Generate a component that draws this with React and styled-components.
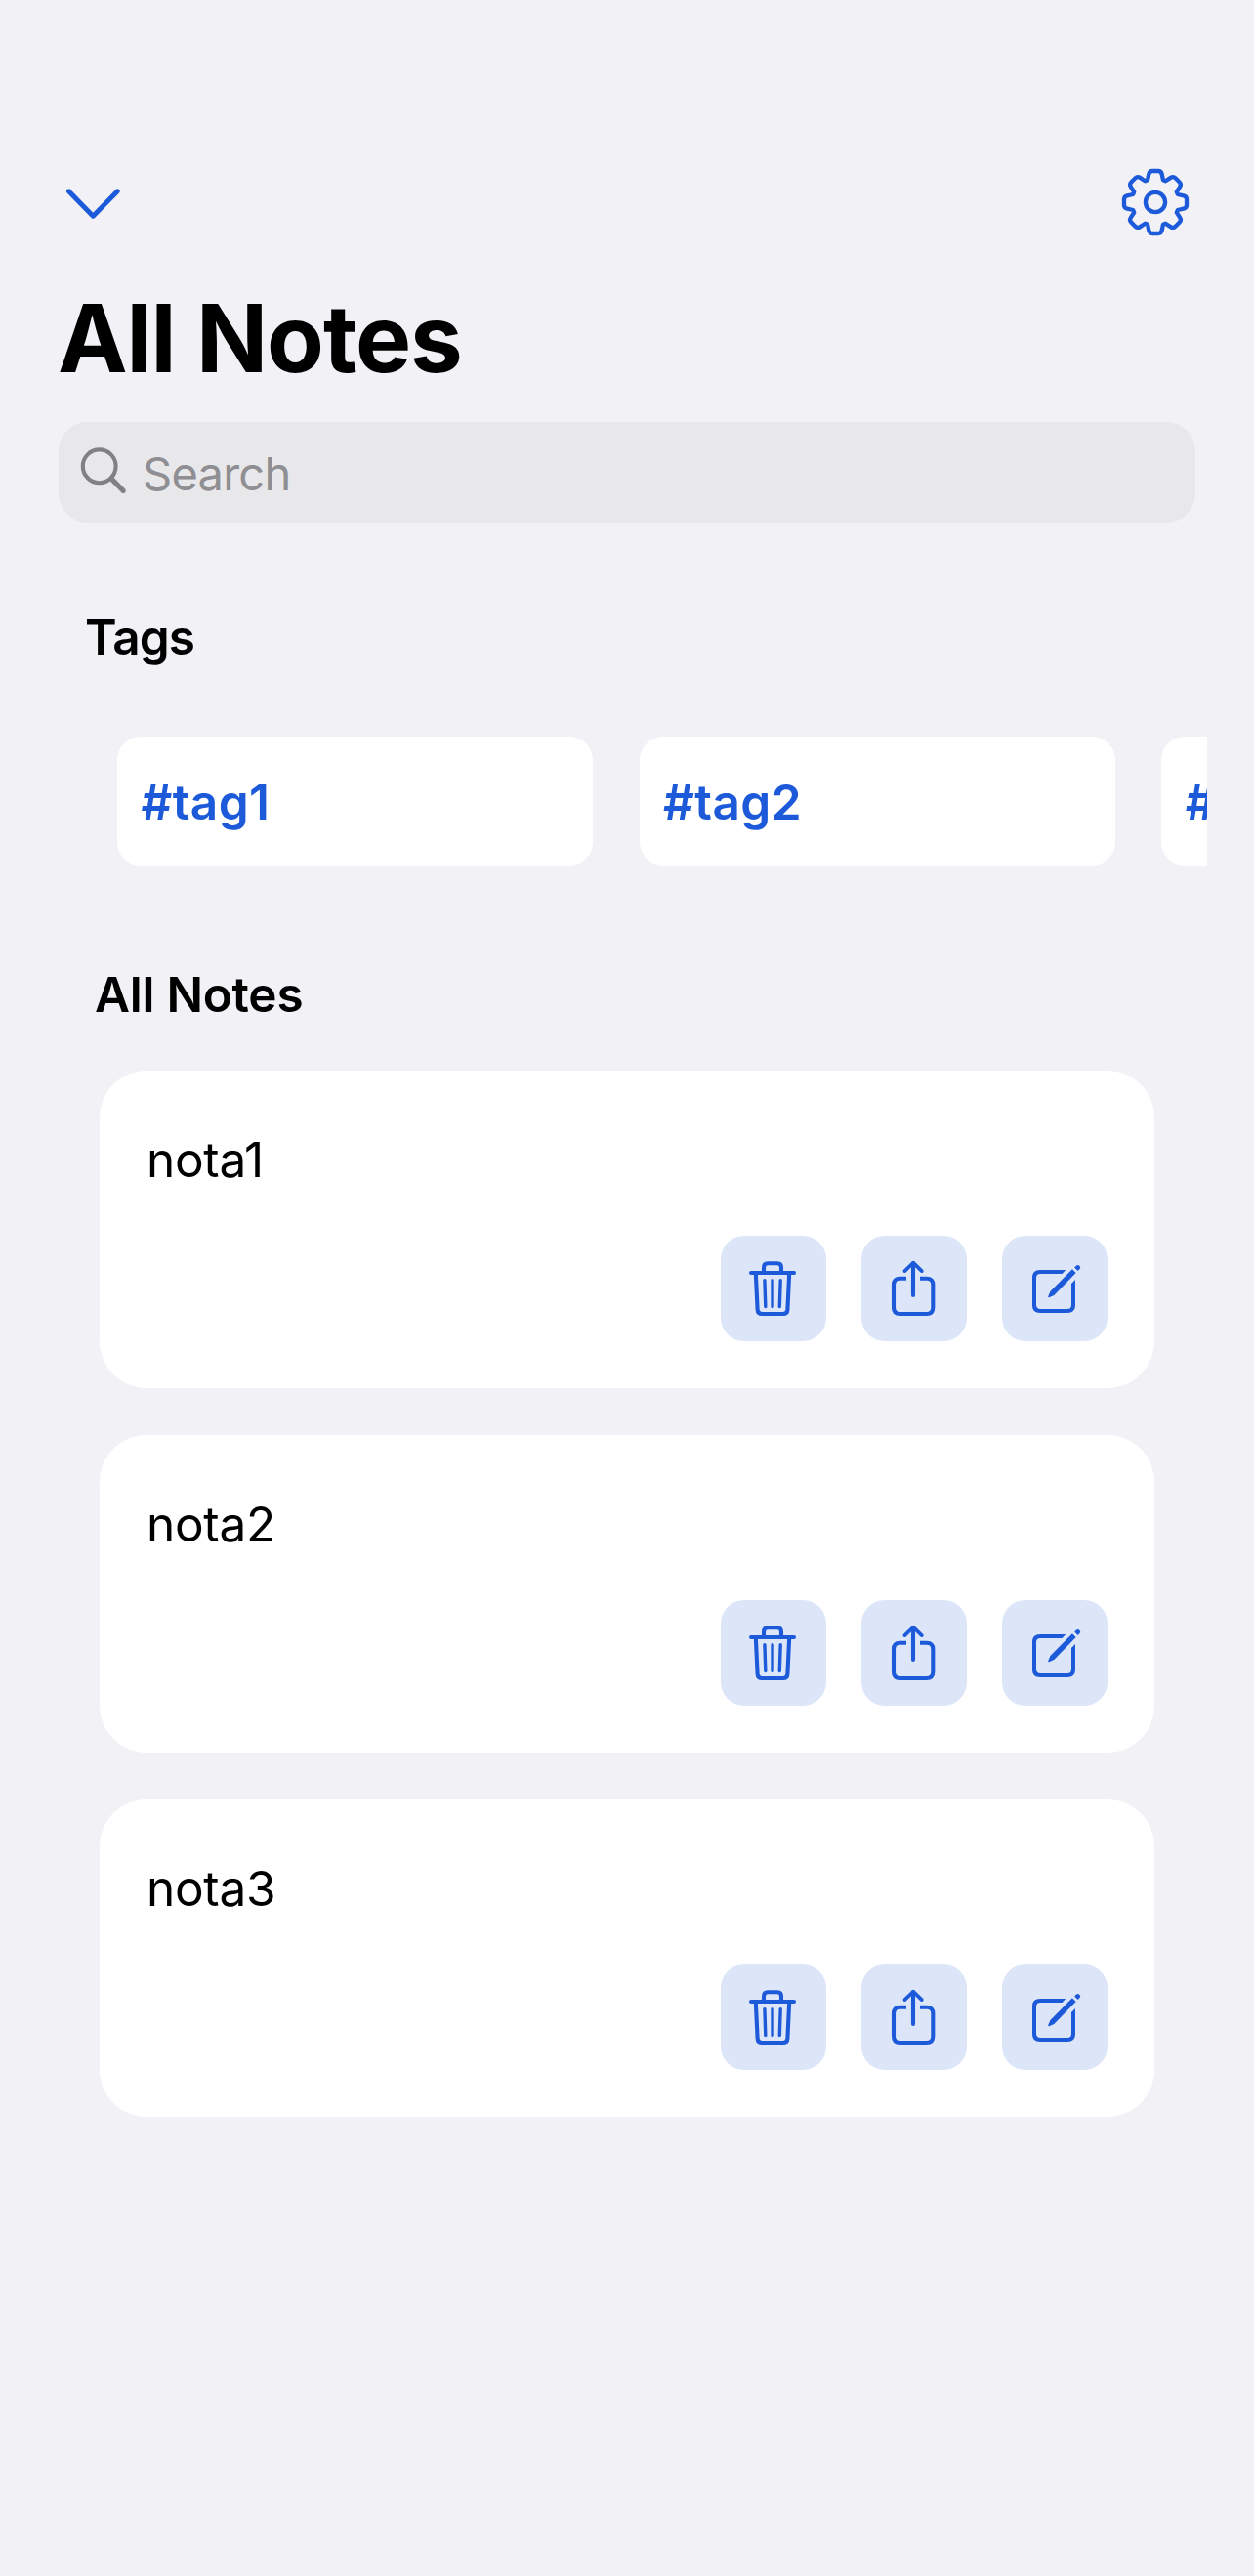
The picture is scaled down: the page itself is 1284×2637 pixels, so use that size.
import React from 'react';
import styled, { createGlobalStyle } from 'styled-components';

const BLUE = '#1c5ada';

const GlobalStyle = createGlobalStyle`
  *, *::before, *::after { box-sizing: border-box; }
  body {
    margin: 0;
    background: #f1f1f6;
    color: #000;
    font-family: Inter, "Liberation Sans", sans-serif;
    -webkit-font-smoothing: antialiased;
  }
`;

const Screen = styled.main`
  width: 1284px;
  min-height: 2637px;
  display: flex;
  flex-direction: column;
  overflow: hidden;
  background: #f1f1f6;
`;

const NavBar = styled.header`
  display: flex;
  align-items: center;
  justify-content: space-between;
  padding: 171px 65px 0;
`;

const IconButton = styled.button`
  display: flex;
  padding: 0;
  border: 0;
  background: none;
  color: ${BLUE};
`;

const Title = styled.h1`
  margin: 45px 0 0 59px;
  font-size: 96px;
  font-weight: 700;
  line-height: 116px;
  letter-spacing: -1.1px;
`;

const SearchBar = styled.div`
  display: flex;
  align-items: center;
  gap: 14px;
  height: 103px;
  margin: 28px 60px 0;
  padding-left: 20px;
  border-radius: 30px;
  background: #e8e8ea;
  color: #818185;
`;

const Placeholder = styled.span`
  padding-top: 1px;
  font-size: 47px;
  line-height: 57px;
  letter-spacing: -0.75px;
  color: #8e8e93;
`;

const SectionTitle = styled.h2`
  margin: 0;
  font-size: 49.5px;
  font-weight: 600;
  line-height: 60px;
  letter-spacing: ${({ $tracking }) => $tracking}px;
`;

const TagsSection = styled.section`
  display: flex;
  flex-direction: column;
  gap: 72px;
  margin-top: 87px;
  padding: 0 48px 0 87px;
`;

const TagScroller = styled.div`
  display: flex;
  gap: 47.6px;
  padding-left: 33px;
  overflow: hidden;
`;

const TagCard = styled.div`
  flex: 0 0 487px;
  height: 132px;
  display: flex;
  align-items: center;
  padding: 2px 24px 0 24.5px;
  border-radius: 24px;
  background: #fff;
  color: ${BLUE};
  font-size: 49.5px;
  font-weight: 600;
  line-height: 60px;
  letter-spacing: 0.4px;
`;

const NotesSection = styled.section`
  display: flex;
  flex-direction: column;
  gap: 48px;
  margin-top: 102px;
  padding: 0 102px 0 97px;
`;

const NoteList = styled.div`
  display: flex;
  flex-direction: column;
  gap: 48px;
  padding-left: 5px;
`;

const NoteCard = styled.article`
  display: flex;
  flex-direction: column;
  gap: 48px;
  padding: 61px 48px 48px;
  border-radius: 48px;
  background: #fff;
`;

const NoteText = styled.p`
  margin: 0;
  font-size: 49.5px;
  line-height: 60px;
  letter-spacing: -0.3px;
`;

const Actions = styled.div`
  display: flex;
  justify-content: flex-end;
  gap: 36px;
`;

const ActionButton = styled.button`
  display: flex;
  width: 108px;
  height: 108px;
  padding: 0;
  border: 0;
  border-radius: 24px;
  background: #dde6f8;
  color: ${BLUE};
`;

const ChevronDown = () => (
  <svg width="60" height="36" fill="none" stroke="currentColor" strokeWidth="5" strokeLinecap="round" strokeLinejoin="round">
    <path d="M5.4 6.8L30.3 32.2L55.3 6.8" />
  </svg>
);

// Eight teeth around the centre, each with rounded tips and short flat valleys.
const gearPath = (() => {
  const tooth = [
    [-8, -22.8], [-6.7, -28.8], [-6, -32], [-3, -32],
    [3, -32], [6, -32], [6.7, -28.8], [8, -22.8],
  ];
  let d = '';
  for (let k = 0; k < 8; k++) {
    const a = (k * Math.PI) / 4;
    const p = tooth.map(
      ([x, y]) => `${(x * Math.cos(a) - y * Math.sin(a)).toFixed(2)} ${(x * Math.sin(a) + y * Math.cos(a)).toFixed(2)}`
    );
    d += `${k ? 'L' : 'M'}${p[0]}L${p[1]}Q${p[2]} ${p[3]}L${p[4]}Q${p[5]} ${p[6]}L${p[7]}`;
  }
  return d + 'Z';
})();

const Gear = () => (
  <svg width="72" height="72" viewBox="-36 -36 72 72" fill="none" stroke="currentColor" strokeWidth="4.3" strokeLinejoin="round">
    <path d={gearPath} />
    <circle r="10.1" />
  </svg>
);

const Magnifier = () => (
  <svg width="52" height="51" fill="none" stroke="currentColor" strokeLinecap="round">
    <circle cx="21.7" cy="19.3" r="16.9" strokeWidth="4.1" />
    <path d="M34.2 32.2L46.2 44.3" strokeWidth="5.2" />
  </svg>
);

const Trash = () => (
  <svg width="108" height="108" fill="none" stroke="currentColor" strokeWidth="4.1" strokeLinejoin="round">
    <path d="M31 38H75" strokeLinecap="round" />
    <path d="M44 38V32.5Q44 28.3 48.2 28.3H57.8Q62 28.3 62 32.5V38" />
    <path d="M35.8 38L37.6 75.6Q37.8 80 42.2 80H63.8Q68.2 80 68.4 75.6L70.2 38" />
    <path d="M44.9 45.7L45.8 72.5M53 45.7V72.5M61.2 45.7L60.3 72.5" strokeWidth="3.4" strokeLinecap="round" />
  </svg>
);

const Share = () => (
  <svg width="108" height="108" fill="none" stroke="currentColor" strokeWidth="4.1" strokeLinejoin="round">
    <path d="M53 28V61" strokeLinecap="round" />
    <path d="M44.4 36.1L53 27.7L61.8 36.1" strokeWidth="3.7" strokeLinecap="round" />
    <path d="M46 43.7H39.5Q33 43.7 33 50.2V73.5Q33 80 39.5 80H66.8Q73.3 80 73.3 73.5V50.2Q73.3 43.7 66.8 43.7H60" />
  </svg>
);

const Compose = () => (
  <svg width="108" height="108" fill="currentColor">
    <path d="M65.2 35H39C33.6 35 31 37.7 31 43V71C31 76.3 33.6 79 39 79H67C72.3 79 75 76.3 75 71V45L71 49V70.5C71 73.6 69.8 75 66.8 75H39.3C36.4 75 35 73.6 35 70.6V43.3C35 40.3 36.4 38.9 39.3 38.9H61.5Z" />
    <path d="M71.9 34.3L75.7 38.1L53.3 61L48.1 63.3Q47 63.4 47.2 62.3L49.4 57Z" />
    <path d="M74.1 32.5L76.1 30.6Q77.7 29.2 79.3 30.7Q81.1 32.4 79.6 34L77.6 36Z" />
  </svg>
);

const TAGS = ['#tag1', '#tag2', '#tag3'];
const NOTES = ['nota1', 'nota2', 'nota3'];

export default function App() {
  return (
    <>
      <GlobalStyle />
      <Screen>
        <NavBar>
          <IconButton aria-label="Back"><ChevronDown /></IconButton>
          <IconButton aria-label="Settings"><Gear /></IconButton>
        </NavBar>
        <Title>All Notes</Title>
        <SearchBar role="search">
          <Magnifier />
          <Placeholder>Search</Placeholder>
        </SearchBar>
        <TagsSection>
          <SectionTitle $tracking={-0.9}>Tags</SectionTitle>
          <TagScroller>
            {TAGS.map((tag) => (
              <TagCard key={tag}>{tag}</TagCard>
            ))}
          </TagScroller>
        </TagsSection>
        <NotesSection>
          <SectionTitle $tracking={-0.25}>All Notes</SectionTitle>
          <NoteList>
            {NOTES.map((note) => (
              <NoteCard key={note}>
                <NoteText>{note}</NoteText>
                <Actions>
                  <ActionButton aria-label="Delete"><Trash /></ActionButton>
                  <ActionButton aria-label="Share"><Share /></ActionButton>
                  <ActionButton aria-label="Edit"><Compose /></ActionButton>
                </Actions>
              </NoteCard>
            ))}
          </NoteList>
        </NotesSection>
      </Screen>
    </>
  );
}
